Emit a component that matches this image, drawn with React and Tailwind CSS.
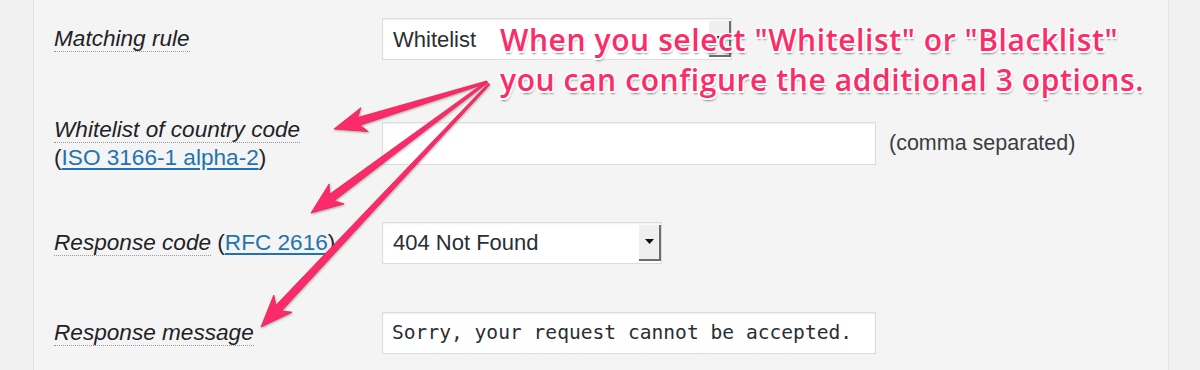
import React from "react";

const LABEL_FONT = { fontFamily: '"Liberation Sans", Arial, sans-serif' };

function Arrow({ ox, oy, tx, ty }) {
  const dx = tx - ox, dy = ty - oy;
  const L = Math.hypot(dx, dy);
  const ux = dx / L, uy = dy / L;
  const nx = -uy, ny = ux;
  const headLen = 26;
  const hbx = tx - ux * headLen, hby = ty - uy * headLen;
  const p = (x, y) => `${x.toFixed(1)},${y.toFixed(1)}`;
  const pts = [
    p(ox + nx * 1, oy + ny * 1),
    p(hbx + nx * 4, hby + ny * 4),
    p(hbx + nx * 12.5 - ux * 6, hby + ny * 12.5 - uy * 6),
    p(tx, ty),
    p(hbx - nx * 12.5 - ux * 6, hby - ny * 12.5 - uy * 6),
    p(hbx - nx * 4, hby - ny * 4),
    p(ox - nx * 1, oy - ny * 1),
  ].join(" ");
  return <polygon points={pts} fill="#fb2c68" stroke="#e0225b" strokeWidth="0.8" strokeLinejoin="round" />;
}

function SelectBox({ width, children }) {
  return (
    <div
      className="flex h-[42px] items-stretch border border-[#dcdcdc] bg-white shadow-[inset_0_1px_2px_rgba(0,0,0,0.07)]"
      style={{ width }}
    >
      <div className="flex flex-1 items-center pl-[10px] text-[22px] text-[#2a2e33]" style={LABEL_FONT}>
        {children}
      </div>
      <div className="my-[2px] flex w-[22px] items-center justify-center border-r-2 border-b-2 border-r-[#6d6d6d] border-b-[#6d6d6d] bg-[#efefef]">
        <svg width="9" height="5" viewBox="0 0 9 5"><polygon points="0,0 9,0 4.5,5" fill="#111" /></svg>
      </div>
    </div>
  );
}

function Label({ children }) {
  return (
    <div className="w-[348px] shrink-0 pl-[20px] text-[22.6px] leading-[28px] text-[#1f2326]" style={LABEL_FONT}>
      {children}
    </div>
  );
}

const dotted = "border-b border-dotted border-[#9a9a9a] italic";

export default function App() {
  return (
    <div className="relative flex h-[370px] w-[1200px] overflow-hidden bg-[#f1f1f1]">
      <div className="w-[33px] shrink-0 bg-[#f1f1f1]" />
      <div className="flex h-full w-[1136px] shrink-0 flex-col border-x border-[#e2e2e2] bg-[#f4f4f4] pt-[18px]">
        {/* Row 1 */}
        <div className="flex h-[42px] items-center">
          <Label>
            <span className={dotted}>Matching rule</span>
          </Label>
          <SelectBox width={350}>Whitelist</SelectBox>
        </div>
        {/* Row 2 */}
        <div className="mt-[62px] flex h-[43px] items-center">
          <Label>
            <span className={dotted}>Whitelist of country code</span>
            <br />(
            <a className="text-[#1f73b0] underline underline-offset-[3px]" href="#">ISO 3166-1 alpha-2</a>)
          </Label>
          <div className="h-[43px] w-[494px] border border-[#dcdcdc] bg-white shadow-[inset_0_1px_2px_rgba(0,0,0,0.07)]" />
          <div className="ml-[13px] text-[21.5px] text-[#3a3d40]" style={LABEL_FONT}>(comma separated)</div>
        </div>
        {/* Row 3 */}
        <div className="mt-[57px] flex h-[41px] items-center">
          <Label>
            <span className={dotted}>Response code</span> (
            <a className="text-[#1f73b0] underline underline-offset-[3px]" href="#">RFC 2616</a>)
          </Label>
          <SelectBox width={280}>404 Not Found</SelectBox>
        </div>
        {/* Row 4 */}
        <div className="mt-[49px] flex h-[42px] items-center">
          <Label>
            <span className={dotted}>Response message</span>
          </Label>
          <div
            className="flex h-[42px] w-[494px] items-center border border-[#dcdcdc] bg-white pl-[9px] text-[19.6px] text-[#2a2e33] shadow-[inset_0_1px_2px_rgba(0,0,0,0.07)]"
            style={{ fontFamily: '"DejaVu Sans Mono", monospace' }}
          >
            Sorry, your request cannot be accepted.
          </div>
        </div>
      </div>
      <div className="flex-1 bg-[#f1f1f1]" />

      {/* Annotation overlay */}
      <svg className="pointer-events-none absolute left-0 top-0" width="1200" height="370" viewBox="0 0 1200 370">
        <defs>
          <filter id="sh" x="-10%" y="-10%" width="120%" height="120%">
            <feDropShadow dx="0.5" dy="1" stdDeviation="0.8" floodColor="#000" floodOpacity="0.35" />
          </filter>
        </defs>
        <g filter="url(#sh)">
          <Arrow ox={487} oy={82} tx={334} ty={129} />
          <Arrow ox={487} oy={82} tx={311} ty={213} />
          <Arrow ox={489} oy={84} tx={261} ty={327} />
        </g>
      </svg>
      <div
        className="absolute left-[500px] top-[20px] text-[30px] leading-[40px] font-semibold tracking-[0.6px] text-[#fb2c68] [text-shadow:1.5px_0_0_#fff,-1.5px_0_0_#fff,0_1.5px_0_#fff,0_-1.5px_0_#fff,1.5px_1.5px_0_#fff,-1.5px_-1.5px_0_#fff,1.5px_-1.5px_0_#fff,-1.5px_1.5px_0_#fff,1px_2.5px_2px_rgba(0,0,0,0.45)]"
        style={{ fontFamily: '"Comic Sans MS", "Open Sans", sans-serif' }}
      >
        <div>When you select "Whitelist" or "Blacklist"</div>
        <div>you can configure the additional 3 options.</div>
      </div>
    </div>
  );
}
